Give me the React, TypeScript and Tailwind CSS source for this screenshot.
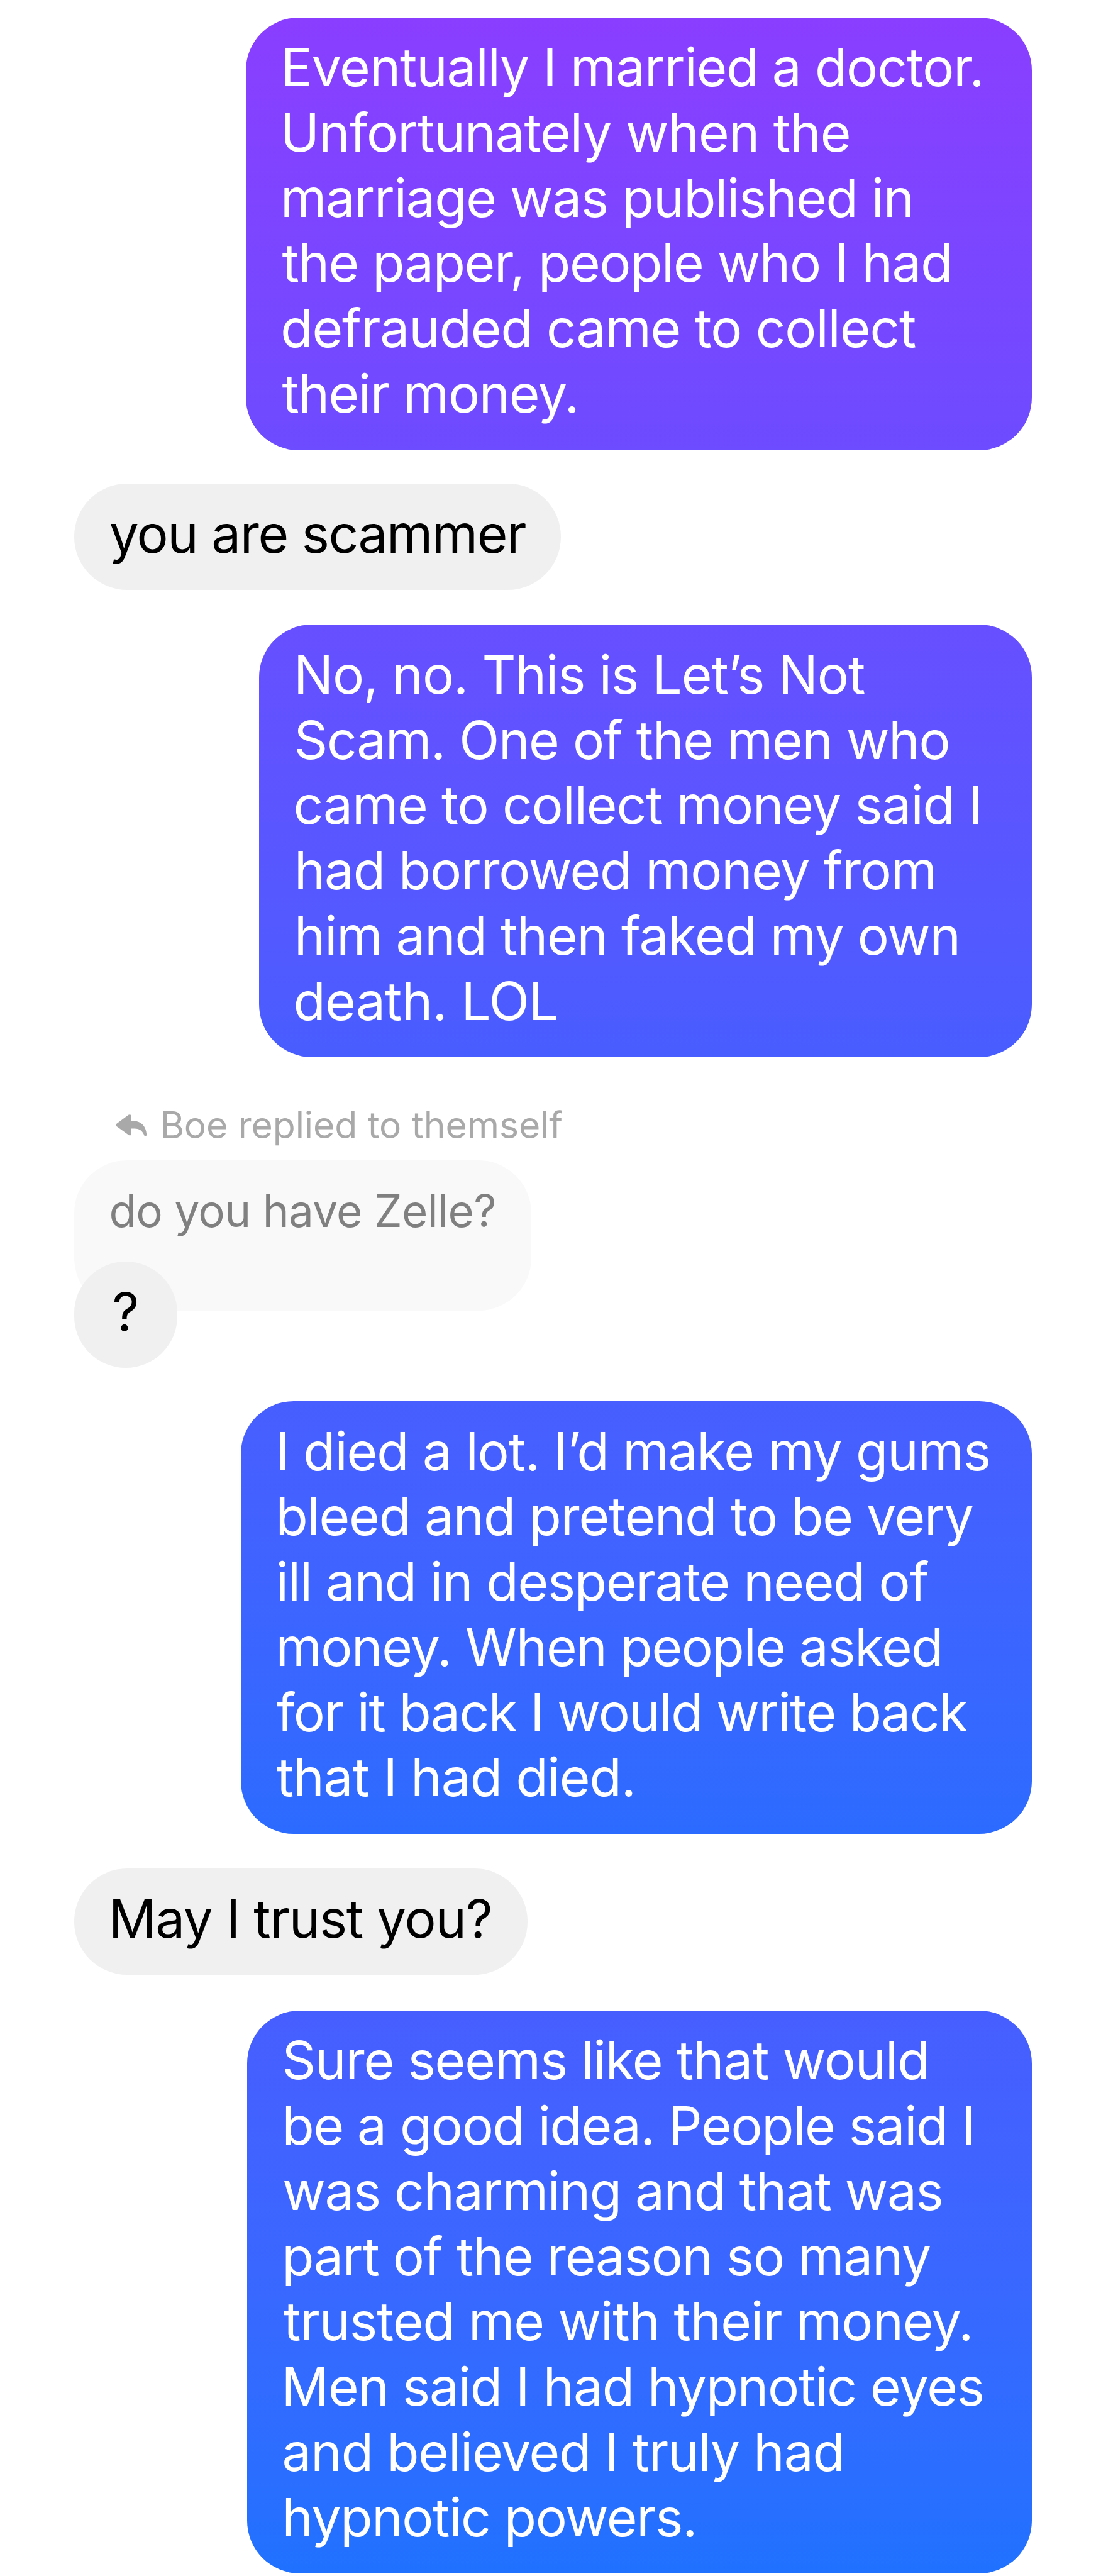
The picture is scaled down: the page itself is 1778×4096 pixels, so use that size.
import type { ReactNode } from "react";

type Line = [text: string, spacing: string];

function Lines({ lines }: { lines: Line[] }) {
  return (
    <>
      {lines.map(([text, spacing]) => (
        <span key={text} className={`block whitespace-nowrap ${spacing}`}>
          {text}
        </span>
      ))}
    </>
  );
}

function Sent({ className, lines }: { className: string; lines: Line[] }) {
  return (
    <div
      className={`mr-[137px] self-end rounded-[84px] bg-linear-to-b pt-[27.6px] pb-[37.8px] text-white ${className}`}
    >
      <Lines lines={lines} />
    </div>
  );
}

function Received({ className, children }: { className: string; children: ReactNode }) {
  return (
    <div
      className={`ml-[117.6px] h-[168.9px] self-start rounded-[84.3px] bg-[#f0f0f0] pt-[27.7px] whitespace-nowrap text-black ${className}`}
    >
      {children}
    </div>
  );
}

function ReplyIcon() {
  return (
    <svg className="h-[35px] w-[49.1px]" viewBox="68 65 178 127" fill="#a9a9a9">
      <path d="M71 120 L143 67 Q157 62 157 76 V103 H176 C216 104 246 138 246 184 Q243 197 234 189 C224 162 208 147 176 147 H157 V176 Q157 190 144 185 L71 132 Q65 126 71 120 Z" />
    </svg>
  );
}

export default function App() {
  return (
    <div className="flex h-[4096px] w-[1778px] flex-col overflow-hidden bg-white font-[Inter,sans-serif] text-[83.7px] leading-[103.77px] font-normal">
      <Sent
        className="mt-[27.6px] w-[1249.6px] from-[#8a3eff] to-[#6d4bff]"
        lines={[
          ["Eventually I married a doctor.", "ml-[55.2px] tracking-[-1.14px]"],
          ["Unfortunately when the", "ml-[54.4px] tracking-[-0.99px]"],
          ["marriage was published in", "ml-[54.5px] tracking-[-1.3px]"],
          ["the paper, people who I had", "ml-[57px] tracking-[-1.33px]"],
          ["defrauded came to collect", "ml-[54.9px] tracking-[-1.11px]"],
          ["their money.", "ml-[57px] tracking-[-1.4px]"],
        ]}
      />
      <Received className="mt-[53.3px] w-[774.7px] pl-[56.1px] tracking-[-1.5px]">you are scammer</Received>
      <Sent
        className="mt-[55.6px] w-[1228.8px] from-[#674fff] to-[#485dff]"
        lines={[
          ["No, no. This is Let’s Not", "ml-[54.7px] tracking-[-1.06px]"],
          ["Scam. One of the men who", "ml-[55.3px] tracking-[-1.26px]"],
          ["came to collect money said I", "ml-[54.4px] tracking-[-1.15px]"],
          ["had borrowed money from", "ml-[55.7px] tracking-[-1.27px]"],
          ["him and then faked my own", "ml-[55.7px] tracking-[-1.25px]"],
          ["death. LOL", "ml-[54.4px] tracking-[-0.78px]"],
        ]}
      />

      <div className="mt-[73.1px] ml-[184.3px] flex h-[70px] items-center text-[58.8px] leading-[70px] whitespace-nowrap text-[#a9a9a9]">
        <ReplyIcon />
        <span className="ml-[21px] tracking-[-0.1px]">Boe replied to themself</span>
      </div>
      <div className="mt-[20.3px] ml-[117.6px] h-[239.1px] w-[727px] rounded-[84px] bg-[#f9f9f9] pt-[37.6px] pl-[56px] text-[71px] leading-[86px] tracking-[-0.7px] whitespace-nowrap text-[#808080]">
        do you have Zelle?
      </div>
      <Received className="-mt-[77.7px] w-[164.9px] pl-[60.9px]">?</Received>

      <Sent
        className="mt-[53px] w-[1258.2px] from-[#485eff] to-[#2c6bff]"
        lines={[
          ["I died a lot. I’d make my gums", "ml-[55.5px] tracking-[-1.06px]"],
          ["bleed and pretend to be very", "ml-[55.6px] tracking-[-1.2px]"],
          ["ill and in desperate need of", "ml-[56px] tracking-[-1.29px]"],
          ["money. When people asked", "ml-[55.6px] tracking-[-1.39px]"],
          ["for it back I would write back", "ml-[57px] tracking-[-1.48px]"],
          ["that I had died.", "ml-[57px] tracking-[-1.04px]"],
        ]}
      />
      <Received className="mt-[54.8px] w-[721.3px] pl-[55.2px] tracking-[-1.24px]">May I trust you?</Received>
      <Sent
        className="mt-[57px] w-[1248.1px] from-[#475eff] to-[#2071ff]"
        lines={[
          ["Sure seems like that would", "ml-[55.6px] tracking-[-1.13px]"],
          ["be a good idea. People said I", "ml-[55.7px] tracking-[-1.35px]"],
          ["was charming and that was", "ml-[56.4px] tracking-[-1.35px]"],
          ["part of the reason so many", "ml-[55.4px] tracking-[-1.26px]"],
          ["trusted me with their money.", "ml-[58px] tracking-[-1.06px]"],
          ["Men said I had hypnotic eyes", "ml-[54.7px] tracking-[-1.23px]"],
          ["and believed I truly had", "ml-[55.6px] tracking-[-1.13px]"],
          ["hypnotic powers.", "ml-[55.7px] tracking-[-1.33px]"],
        ]}
      />
    </div>
  );
}
